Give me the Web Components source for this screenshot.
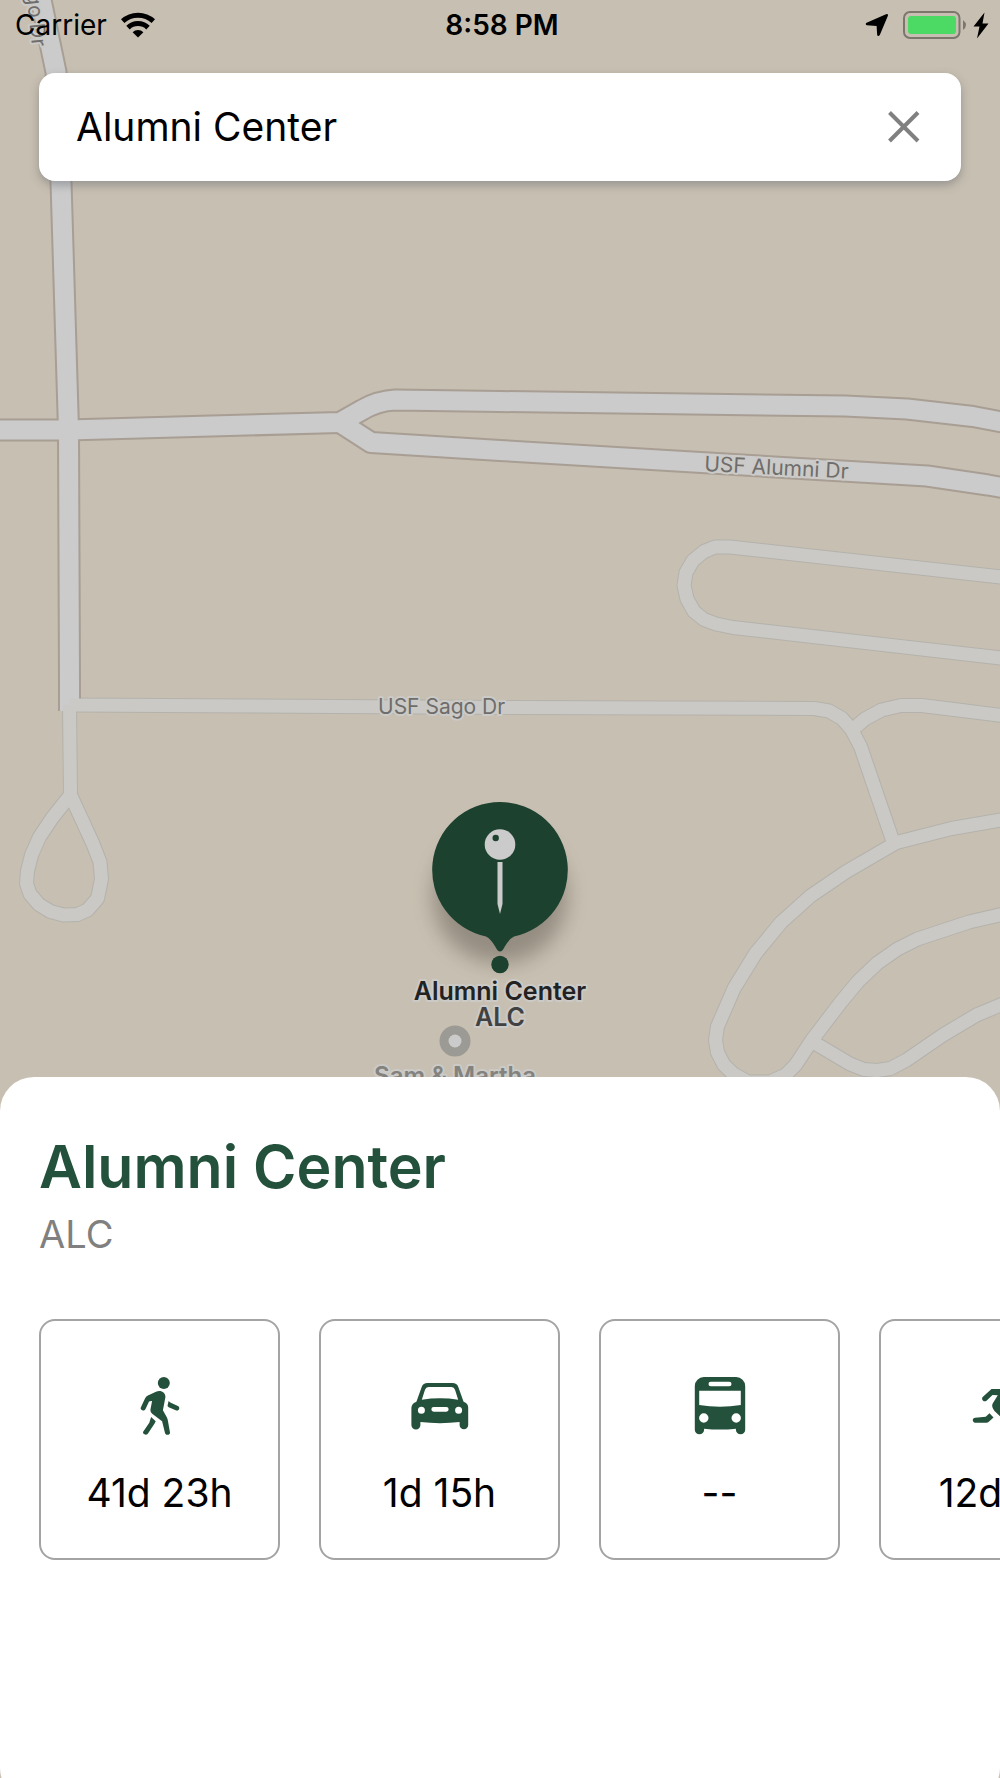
<!DOCTYPE html>
<html lang="en">
<head>
<meta charset="utf-8">
<meta name="viewport" content="width=device-width, initial-scale=1">
<title>Campus Map</title>
<style>
    body {
        margin: 0;
        font-family: Inter, "Liberation Sans", sans-serif;
        color: #000;
    }
</style>
</head>
<body>
<campus-app></campus-app>

<script>
"use strict";

class StatusBar extends HTMLElement {
    connectedCallback() {
        const shadowRoot = this.attachShadow({ mode: 'open' });
        shadowRoot.innerHTML = `
        <style>
            :host {
                display: grid;
                grid-template-columns: 1fr auto 1fr;
                align-items: center;
                height: 50px;
                padding: 0 11px 0 15px;
                font-size: 28px;
                line-height: 34px;
            }
            .carrier, .power { display: flex; align-items: center; }
            .carrier { gap: 14px; }
            .time { font-weight: 600; }
            .power { justify-content: flex-end; gap: 14px; }
            svg { display: block; }
        </style>
        <div class="carrier">
            <span><slot name="carrier"></slot></span>
            <svg width="34" height="26" viewBox="0 0 34 26" aria-hidden="true">
                <path d="M17 25.500 L11.600 20.200 A8 8 0 0 1 22.400 20.200 Z"/>
                <path d="M7 15.600 A14.500 14.500 0 0 1 27 15.600" fill="none" stroke="#000" stroke-width="5"/>
                <path d="M1.700 9.200 A22.500 22.500 0 0 1 32.300 9.200" fill="none" stroke="#000" stroke-width="5"/>
            </svg>
        </div>
        <div class="time"><slot></slot></div>
        <div class="power">
            <svg width="24" height="24" viewBox="0 0 24 24" aria-hidden="true">
                <path d="M21 1.200 Q23.600 0.500 22.800 3 L14.800 22 Q13.300 24 12.200 22.300 L11.600 12.900 L1.800 12.200 Q-0.200 10.900 1.600 9.800 Z"/>
            </svg>
            <svg width="86" height="28" viewBox="0 0 86 28" aria-hidden="true">
                <rect x="1" y="1" width="55.500" height="26" rx="6" fill="none" stroke="#7c766d" stroke-width="2"/>
                <rect x="5" y="5" width="48" height="18" rx="3" fill="#4cd964"/>
                <path d="M60 9 Q66 14 60 19 Z" fill="#7c766d"/>
                <path d="M81.500 1.500 L70.500 15.500 H76.500 L74 27.500 L85.500 12.500 H79.500 Z"/>
            </svg>
        </div>
        `
    }
}

class SearchBar extends HTMLElement {
    connectedCallback() {
        const shadowRoot = this.attachShadow({ mode: 'open' });
        shadowRoot.innerHTML = `
        <style>
            :host {
                display: flex;
                align-items: center;
                height: 108px;
                padding: 0 34px 0 37px;
                box-sizing: border-box;
                border-radius: 16px;
                background: #fff;
                box-shadow: 0 4px 10px rgba(90, 95, 105, 0.45);
            }
            input {
                flex: 1;
                min-width: 0;
                padding: 0;
                border: 0;
                outline: 0;
                background: none;
                font: inherit;
                font-size: 39px;
                line-height: 48px;
                color: #000;
            }
            button {
                padding: 7px;
                border: 0;
                background: none;
            }
            svg { display: block; }
        </style>
        <input type="text" aria-label="Search buildings" value="${this.getAttribute('value')}">
        <button type="button" aria-label="Clear">
            <svg width="32" height="32" viewBox="0 0 32 32">
                <path d="M1.500 1.500 L30 30 M30 1.500 L1.500 30" stroke="#808080" stroke-width="4"/>
            </svg>
        </button>
        `
        const input = shadowRoot.querySelector('input');
        shadowRoot.querySelector('button').addEventListener('click', () => {
            input.value = '';
            input.focus();
        });
    }
}

class CampusMap extends HTMLElement {
    connectedCallback() {
        const major = `
            <path d="M39 -10 L41 0 L56 72 L61 182 L67 380 L68.500 430 L69.500 680 L69.500 711"/>
            <path d="M-10 430 L68 430 L340 422.500 L362 410 Q377 401 395 400 L500 401.500 L845 406 L907 409 L973 416.500 L1010 423.500"/>
            <path d="M340 422.500 L371 442.500 L500 450.500 L927 476 L988 485 L1010 489"/>`;
        const minor = `
            <path d="M1010 578 L730 547 L715 547 L704 551.500 L693 560.500 L686 572.500 L684 585.500 L687 599 L694 611.500 L704 619.500 L716 624 L733 627.500 L1010 659"/>
            <path d="M70 705 L500 707.500 L814 708.500 L829 711 L842 718.500 L851.500 729.500 L860.500 746.500 L892.500 840"/>
            <path d="M852 730 L865 719 L881.500 710 L901 705.500 L922 705.500 L1010 716.500"/>
            <path d="M1010 818.500 L951.500 828.500 L896.500 842.500 L846.500 871.500 L810.500 896 L781 922.500 L755.500 953.500 L734 988.500 L717.500 1026.500 L715.500 1040 L717.500 1052.500 L724 1065 L733.500 1074 L748 1082 L770 1082 L785.500 1075 L795.500 1065 L812 1040 L841 1002 L858 981.500 L877.500 963 L897.500 949 L917.500 939 L969 922 L1010 912.500"/>
            <path d="M813 1042 L850 1064 L864 1069.500 L877 1070.500 L890.500 1068.500 L906.500 1060 L943 1035 L976.500 1015 L1010 1001"/>
            <path d="M69.500 705 L70.500 795 L52.500 817.500 L39.500 837 L31.500 855 L27.500 871 L26.500 883.500 L30 894 L39 904.500 L50.500 911.500 L63.500 915 L77.500 914.500 L87.500 910 L97.500 898.500 L101.500 879 L100 862 L93 844 L70.500 795"/>`;
        const shadowRoot = this.attachShadow({ mode: 'open' });
        shadowRoot.innerHTML = `
        <style>
            :host { display: block; background: #c7bfb1; overflow: hidden; }
            svg { display: block; width: 100%; height: 100%; }
            g path { fill: none; stroke-linejoin: round; }
            .minor-case path { stroke: #b4b2ac; stroke-width: 15px; }
            .major-case path { stroke: #a89e94; stroke-width: 23px; }
            .minor path { stroke: #cac9c5; stroke-width: 13px; }
            .major path { stroke: #cbcbcb; stroke-width: 19px; }
            text { paint-order: stroke; stroke: #cbcac7; stroke-width: 4px; stroke-linejoin: round; }
            .road { font-size: 21px; fill: #6e6d6c; }
            .place { font-size: 25px; font-weight: 600; text-anchor: middle; }
            .other { font-size: 24px; fill: #84827e; }
        </style>
        <svg viewBox="0 0 1000 1778" preserveAspectRatio="xMidYMin slice">
            <defs>
                <filter id="soft" x="-30%" y="-30%" width="160%" height="160%">
                    <feGaussianBlur stdDeviation="10"/>
                </filter>
            </defs>
            <g class="minor-case">${minor}</g>
            <g class="major-case">${major}</g>
            <g class="major">${major}</g>
            <g class="minor">${minor}</g>

            <text class="road" text-anchor="end" transform="translate(32 47) rotate(84)">USF Sago Dr</text>
            <text class="road" transform="translate(704 471) rotate(3)">USF Alumni Dr</text>
            <text class="road" x="378" y="714">USF Sago Dr</text>

            <circle cx="455" cy="1041" r="15.500" fill="#9c9a94"/>
            <circle cx="455" cy="1041" r="6.500" fill="#cbcbcb"/>
            <text class="place other" x="455" y="1084">Sam &amp; Martha</text>

            <circle cx="500" cy="896" r="67" fill="#5f574d" opacity="0.480" filter="url(#soft)"/>
            <path fill="#1d412f" d="M500 802 A68 68 0 0 1 514 936.500 Q509 939 504.500 947 Q500 956 495.500 947 Q491 939 486 936.500 A68 68 0 0 1 500 802 Z"/>
            <circle cx="500" cy="964.500" r="8.700" fill="#1d412f"/>
            <circle cx="500" cy="844.500" r="15.300" fill="#cbcbcb"/>
            <circle cx="495.700" cy="838" r="3.200" fill="#1d412f"/>
            <path fill="#cbcbcb" d="M497.500 862 H502.500 V904 L500 914 L497.500 904 Z"/>
            <text class="place" x="500" y="1000" fill="#222">Alumni Center</text>
            <text class="place" x="500" y="1026" fill="#414141">ALC</text>
        </svg>
        `
    }
}

const ICONS = {
    walk: `
        <circle cx="33.800" cy="7" r="6"/>
        <path d="M26 15.700 C31 13.800 35.800 16.700 35.400 21.300 L32.900 34.300 L36.800 41.300 Q37.700 43 37.900 44.700 L40 56.500 C40.300 59.300 35.700 59.800 35 57 L32.100 45.300 L22.200 37.800 Q20.200 36.500 20.400 33.800 L22.100 25 L19.800 25.200 L18.900 25.700 L15.400 33.300 C14 35.800 9.800 34.200 10.800 31.600 L14.900 22.700 Q15.800 20.700 17.900 19.600 Z"/>
        <path d="M38.600 25 L40.300 26.600 L47.900 30 C50.600 31.600 49 35.300 46.300 34.500 L38.700 31.200 L37.500 30 Z"/>
        <path d="M21.100 41 L25.700 45.300 L24.600 47.500 L18 57.500 C16.400 60 12 58.100 13.300 55.600 L19.300 46.800 Z"/>`,
    drive: `
        <path fill-rule="evenodd" d="M17.500 7 H42.500 Q46.800 7 48.200 10.700 L53.600 25.700 Q58.200 27.500 58.200 31.500 V49 A4.300 4.300 0 0 1 49.600 49 V46 Q30 48.300 10.400 46 V49 A4.300 4.300 0 0 1 1.400 49 V31.500 Q1.800 27.500 6.400 25.700 L11.800 10.700 Q13.200 7 17.500 7 Z
        M18.600 11 Q15.800 11 15 13.700 L11.800 23.700 Q30 21 48.200 23.700 L45 13.700 Q44.200 11 41.400 11 Z
        M23.700 31 A2.300 2.300 0 0 0 23.700 35.700 H36.300 A2.300 2.300 0 0 0 36.300 31 Z
        M7.900 34.300 A3.500 3.500 0 1 0 14.900 34.300 A3.500 3.500 0 1 0 7.900 34.300 Z
        M45.100 34.300 A3.500 3.500 0 1 0 52.100 34.300 A3.500 3.500 0 1 0 45.100 34.300 Z"/>`,
    bus: `
        <path fill-rule="evenodd" d="M13.800 1 H46.200 A9 9 0 0 1 55.200 10 V53.700 A4.600 4.600 0 0 1 45.900 53.700 V52.700 Q30 54.500 14.100 52.700 V53.700 A4.600 4.600 0 0 1 4.800 53.700 V10 A9 9 0 0 1 13.800 1 Z
        M20.800 5.700 A2.300 2.300 0 0 0 20.800 10.300 H39.200 A2.300 2.300 0 0 0 39.200 5.700 Z
        M9.200 14.700 V29 Q30 32.500 50.800 29 V14.700 Z
        M9.100 42 A4.700 4.700 0 1 0 18.500 42 A4.700 4.700 0 1 0 9.100 42 Z
        M41.500 42 A4.700 4.700 0 1 0 50.900 42 A4.700 4.700 0 1 0 41.500 42 Z"/>`,
    run: `
        <circle cx="42" cy="7" r="6"/>
        <path d="M21.500 13 H34 L40 18 L35 33 L40 40 L37 56 L31 56 L33 43 L24.500 35 Q21 31 22.700 27.500 L27.800 19.300 L22.500 18.900 L16.500 24.700 C14 26.600 10.700 23.500 12.700 21 Z"/>
        <path d="M41 23 L46 28 L54 26 L55 31 L44 34 L39 29 Z"/>
        <path d="M19.500 37.200 L23.500 41.500 L18.500 46 Q17.800 46.700 16.500 46.700 H5.200 C2 46.500 2 42 5.200 41.800 L15.700 40.800 Z"/>`
};

class TravelOption extends HTMLElement {
    connectedCallback() {
        const shadowRoot = this.attachShadow({ mode: 'open' });
        shadowRoot.innerHTML = `
        <style>
            :host { display: block; flex: none; }
            button {
                display: flex;
                flex-direction: column;
                align-items: center;
                gap: 34px;
                width: 241px;
                height: 241px;
                padding: 55px 0 0;
                box-sizing: border-box;
                border: 2px solid #a4a4a4;
                border-radius: 16px;
                background: #fff;
                color: #000;
                font: inherit;
                font-size: 39px;
                line-height: 46px;
                white-space: nowrap;
            }
            svg { display: block; fill: #24513b; }
        </style>
        <button type="button">
            <svg width="60" height="60" viewBox="0 0 60 60" aria-hidden="true">${ICONS[this.getAttribute('mode')]}</svg>
            <span><slot></slot></span>
        </button>
        `
    }
}

class PlaceSheet extends HTMLElement {
    connectedCallback() {
        const shadowRoot = this.attachShadow({ mode: 'open' });
        shadowRoot.innerHTML = `
        <style>
            :host {
                display: block;
                box-sizing: border-box;
                min-height: 725px;
                padding-top: 54px;
                border-radius: 34px;
                background: #fff;
            }
            h1, p { margin: 0 39px; }
            h1 {
                font-size: 59px;
                line-height: 72px;
                font-weight: 600;
                color: #24513b;
            }
            p {
                margin-top: 8px;
                font-size: 38px;
                line-height: 46px;
                color: #808080;
            }
            .options {
                display: flex;
                gap: 39px;
                margin-top: 62px;
                padding: 0 39px;
                overflow-x: auto;
                scrollbar-width: none;
            }
        </style>
        <h1><slot name="name"></slot></h1>
        <p><slot name="code"></slot></p>
        <div class="options"><slot></slot></div>
        `
    }
}

class CampusApp extends HTMLElement {
    connectedCallback() {
        const shadowRoot = this.attachShadow({ mode: 'open' });
        shadowRoot.innerHTML = `
        <style>
            :host {
                display: flex;
                flex-direction: column;
                position: relative;
                min-height: 100vh;
                overflow: hidden;
            }
            campus-map { position: absolute; inset: 0; }
            status-bar, search-bar, place-sheet { position: relative; }
            search-bar { margin: 23px 39px; }
            /* the sheet hangs a little below the screen edge */
            place-sheet { margin-top: auto; margin-bottom: -24px; }
        </style>
        <campus-map></campus-map>
        <status-bar><span slot="carrier">Carrier</span>8:58 PM</status-bar>
        <search-bar value="Alumni Center"></search-bar>
        <place-sheet>
            <span slot="name">Alumni Center</span>
            <span slot="code">ALC</span>
            <travel-option mode="walk">41d 23h</travel-option>
            <travel-option mode="drive">1d 15h</travel-option>
            <travel-option mode="bus">--</travel-option>
            <travel-option mode="run">12d 6h</travel-option>
        </place-sheet>
        `
    }
}

customElements.define('status-bar', StatusBar);
customElements.define('search-bar', SearchBar);
customElements.define('campus-map', CampusMap);
customElements.define('travel-option', TravelOption);
customElements.define('place-sheet', PlaceSheet);
customElements.define('campus-app', CampusApp);
</script>
</body>
</html>
